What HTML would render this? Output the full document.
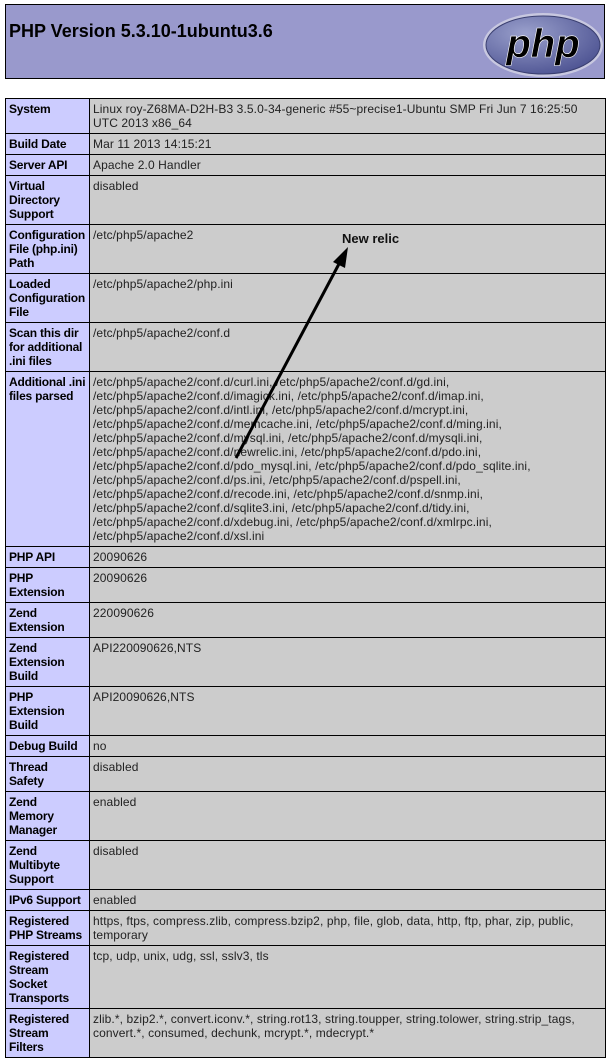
<!DOCTYPE html>
<html><head><meta charset="utf-8"><style>
html,body{margin:0;padding:0;background:#fff;width:608px;height:1061px;overflow:hidden}
body{font-family:"Liberation Sans",Arial,sans-serif;font-size:12px;color:#222;position:relative}
.hdr{position:absolute;left:5px;top:4px;width:598px;height:73px;background:#9999cc;border:1px solid #000}
.hdr h1{position:absolute;left:3px;top:16px;margin:0;font-size:18px;font-weight:bold;color:#000}
table{position:absolute;left:5px;top:98px;width:601px;border-collapse:collapse;table-layout:fixed}
td{border:1px solid #000;vertical-align:top;padding:3px 2px 3px 3px;line-height:14px;white-space:nowrap;overflow:hidden}
td.e{background:#ccccff;font-weight:bold;color:#000;width:78px;letter-spacing:-0.2px}
td.v{background:#cccccc;color:#222;letter-spacing:0.1px}
</style></head><body>
<div class="hdr"><h1>PHP Version 5.3.10-1ubuntu3.6</h1>
<svg style="position:absolute;left:476px;top:7px" width="122" height="66" viewBox="0 0 122 66">
<defs><radialGradient id="g" cx="0.35" cy="0.3" r="0.8"><stop offset="0" stop-color="#9aa0cc"/><stop offset="0.6" stop-color="#6a70a8"/><stop offset="1" stop-color="#4a5090"/></radialGradient></defs>
<ellipse cx="61" cy="33" rx="60" ry="32" fill="#c8c8e0"/>
<ellipse cx="61" cy="33" rx="57" ry="29" fill="url(#g)" stroke="#3a3f70" stroke-width="1"/>
<text x="61" y="45" text-anchor="middle" font-family="Liberation Sans,sans-serif" font-size="40" font-weight="bold" font-style="italic" fill="#000" stroke="#fff" stroke-width="0.6">php</text>
</svg></div>
<table>
<tr><td class="e">System</td><td class="v">Linux roy-Z68MA-D2H-B3 3.5.0-34-generic #55~precise1-Ubuntu SMP Fri Jun 7 16:25:50<br>UTC 2013 x86_64</td></tr>
<tr><td class="e">Build Date</td><td class="v">Mar 11 2013 14:15:21</td></tr>
<tr><td class="e">Server API</td><td class="v">Apache 2.0 Handler</td></tr>
<tr><td class="e">Virtual<br>Directory<br>Support</td><td class="v">disabled</td></tr>
<tr><td class="e">Configuration<br>File (php.ini)<br>Path</td><td class="v">/etc/php5/apache2</td></tr>
<tr><td class="e">Loaded<br>Configuration<br>File</td><td class="v">/etc/php5/apache2/php.ini</td></tr>
<tr><td class="e">Scan this dir<br>for additional<br>.ini files</td><td class="v">/etc/php5/apache2/conf.d</td></tr>
<tr><td class="e">Additional .ini<br>files parsed</td><td class="v">/etc/php5/apache2/conf.d/curl.ini, /etc/php5/apache2/conf.d/gd.ini,<br>/etc/php5/apache2/conf.d/imagick.ini, /etc/php5/apache2/conf.d/imap.ini,<br>/etc/php5/apache2/conf.d/intl.ini, /etc/php5/apache2/conf.d/mcrypt.ini,<br>/etc/php5/apache2/conf.d/memcache.ini, /etc/php5/apache2/conf.d/ming.ini,<br>/etc/php5/apache2/conf.d/mysql.ini, /etc/php5/apache2/conf.d/mysqli.ini,<br>/etc/php5/apache2/conf.d/newrelic.ini, /etc/php5/apache2/conf.d/pdo.ini,<br>/etc/php5/apache2/conf.d/pdo_mysql.ini, /etc/php5/apache2/conf.d/pdo_sqlite.ini,<br>/etc/php5/apache2/conf.d/ps.ini, /etc/php5/apache2/conf.d/pspell.ini,<br>/etc/php5/apache2/conf.d/recode.ini, /etc/php5/apache2/conf.d/snmp.ini,<br>/etc/php5/apache2/conf.d/sqlite3.ini, /etc/php5/apache2/conf.d/tidy.ini,<br>/etc/php5/apache2/conf.d/xdebug.ini, /etc/php5/apache2/conf.d/xmlrpc.ini,<br>/etc/php5/apache2/conf.d/xsl.ini</td></tr>
<tr><td class="e">PHP API</td><td class="v">20090626</td></tr>
<tr><td class="e">PHP<br>Extension</td><td class="v">20090626</td></tr>
<tr><td class="e">Zend<br>Extension</td><td class="v">220090626</td></tr>
<tr><td class="e">Zend<br>Extension<br>Build</td><td class="v">API220090626,NTS</td></tr>
<tr><td class="e">PHP<br>Extension<br>Build</td><td class="v">API20090626,NTS</td></tr>
<tr><td class="e">Debug Build</td><td class="v">no</td></tr>
<tr><td class="e">Thread<br>Safety</td><td class="v">disabled</td></tr>
<tr><td class="e">Zend<br>Memory<br>Manager</td><td class="v">enabled</td></tr>
<tr><td class="e">Zend<br>Multibyte<br>Support</td><td class="v">disabled</td></tr>
<tr><td class="e">IPv6 Support</td><td class="v">enabled</td></tr>
<tr><td class="e">Registered<br>PHP Streams</td><td class="v">https, ftps, compress.zlib, compress.bzip2, php, file, glob, data, http, ftp, phar, zip, public,<br>temporary</td></tr>
<tr><td class="e">Registered<br>Stream<br>Socket<br>Transports</td><td class="v">tcp, udp, unix, udg, ssl, sslv3, tls</td></tr>
<tr><td class="e">Registered<br>Stream<br>Filters</td><td class="v">zlib.*, bzip2.*, convert.iconv.*, string.rot13, string.toupper, string.tolower, string.strip_tags,<br>convert.*, consumed, dechunk, mcrypt.*, mdecrypt.*</td></tr>
</table>
<svg style="position:absolute;left:0;top:0" width="608" height="1061">
<line x1="236" y1="458" x2="340" y2="262" stroke="#000" stroke-width="3"/>
<polygon points="348,247 333,262 345,268" fill="#000"/>
<text x="342" y="243" font-family="Liberation Sans,sans-serif" font-size="13" font-weight="bold" fill="#111">New relic</text>
</svg>
</body></html>
